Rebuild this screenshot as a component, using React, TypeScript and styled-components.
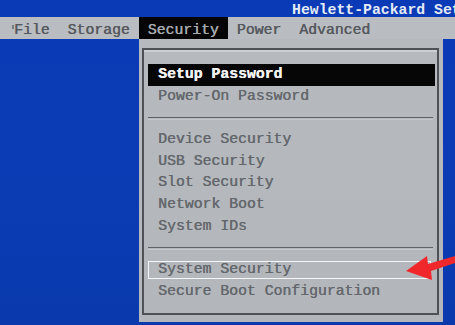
import React from "react";
import styled, { createGlobalStyle } from "styled-components";

const Global = createGlobalStyle`
  html, body { margin: 0; padding: 0; background: #0b3bb4; }
  body { font-family: "Liberation Mono", "DejaVu Sans Mono", monospace; }
`;

const Screen = styled.div`
  position: relative;
  width: 455px;
  height: 325px;
  overflow: hidden;
  background: linear-gradient(180deg, #0a3ab6 0%, #0b3cb4 60%, #0a39ad 100%);
  display: flex;
  flex-direction: column;
  font-family: "Liberation Mono", "DejaVu Sans Mono", monospace;
  font-size: 14.8px;
`;

const TitleRow = styled.div`
  height: 17px;
  line-height: 20px;
  padding-left: 292px;
  white-space: nowrap;
  overflow: hidden;
  color: #e4ebf7;
  font-weight: bold;
`;

const MenuBar = styled.div`
  height: 22px;
  display: flex;
  align-items: stretch;
  padding-left: 3px;
  background: #b9bcc0;
`;

const MenuItem = styled.div<{ $active?: boolean }>`
  padding: 2px 9px 0;
  line-height: 22px;
  white-space: nowrap;
  color: ${(p) => (p.$active ? "#a7abb0" : "#55595e")};
  background: ${(p) => (p.$active ? "#050505" : "transparent")};
  margin-bottom: ${(p) => (p.$active ? "-1px" : "0")};
  text-shadow: 0.4px 0 0 currentColor;
`;

const Tick = styled.span`
  display: inline-block;
  width: 2px;
  height: 4px;
  background: #7a7e82;
  vertical-align: top;
  margin-top: 6px;
`;

const Body = styled.div`
  flex: 1;
  display: flex;
  padding-left: 139px;
`;

const Panel = styled.div`
  width: 304px;
  height: 283px;
  box-sizing: border-box;
  padding: 9px 4px 7px 3px;
  background: linear-gradient(180deg, #b6babe 0%, #b3b7bb 100%);
  display: flex;
`;

const Frame = styled.div`
  flex: 1;
  box-sizing: border-box;
  border: 2px solid #4e5256;
  box-shadow: inset 0 2px 0 #cdd0d3;
  padding: 14px 4px 0 4px;
  display: flex;
  flex-direction: column;
`;

const Row = styled.div<{ $selected?: boolean; $outlined?: boolean }>`
  position: relative;
  height: 21.7px;
  line-height: 21.7px;
  padding-left: 10px;
  white-space: nowrap;
  color: ${(p) => (p.$selected ? "#f2f2f2" : "#64686d")};
  background: ${(p) => (p.$selected ? "#060606" : "transparent")};
  font-weight: ${(p) => (p.$selected ? "bold" : "normal")};
  margin-right: ${(p) => (p.$selected ? "-2px" : "0")};
  text-shadow: 0.4px 0 0 currentColor;
  &::after {
    content: "";
    display: ${(p) => (p.$outlined ? "block" : "none")};
    position: absolute;
    left: 0;
    right: 2px;
    top: 2px;
    bottom: 2px;
    border: 1.5px solid #f4f6f8;
  }
`;

const Separator = styled.div`
  height: 21.7px;
  display: flex;
  align-items: center;
  &::before {
    content: "";
    flex: 1;
    height: 1px;
    border-top: 1.5px solid #5e6267;
    border-bottom: 1px solid #c6c9cc;
  }
`;

const Arrow = styled.svg`
  position: absolute;
  left: 400px;
  top: 250px;
  width: 55px;
  height: 35px;
`;

type Item = { label?: string; sep?: boolean; selected?: boolean; outlined?: boolean };

const items: Item[] = [
  { label: "Setup Password", selected: true },
  { label: "Power-On Password" },
  { sep: true },
  { label: "Device Security" },
  { label: "USB Security" },
  { label: "Slot Security" },
  { label: "Network Boot" },
  { label: "System IDs" },
  { sep: true },
  { label: "System Security", outlined: true },
  { label: "Secure Boot Configuration" },
];

export default function App() {
  return (
    <>
      <Global />
      <Screen>
        <TitleRow>Hewlett-Packard Setup Utility</TitleRow>
        <MenuBar>
          <MenuItem>
            <Tick />
            File
          </MenuItem>
          <MenuItem>Storage</MenuItem>
          <MenuItem $active>Security</MenuItem>
          <MenuItem>Power</MenuItem>
          <MenuItem>Advanced</MenuItem>
        </MenuBar>
        <Body>
          <Panel>
            <Frame>
              {items.map((it, i) =>
                it.sep ? (
                  <Separator key={i} />
                ) : (
                  <Row key={i} $selected={it.selected} $outlined={it.outlined}>
                    {it.label}
                  </Row>
                )
              )}
            </Frame>
          </Panel>
        </Body>
        <Arrow viewBox="0 0 55 35">
          <polygon
            points="6,21 27,6 28,14 55,6 55,13 31,21 32,30"
            fill="#f0282c"
          />
        </Arrow>
      </Screen>
    </>
  );
}
